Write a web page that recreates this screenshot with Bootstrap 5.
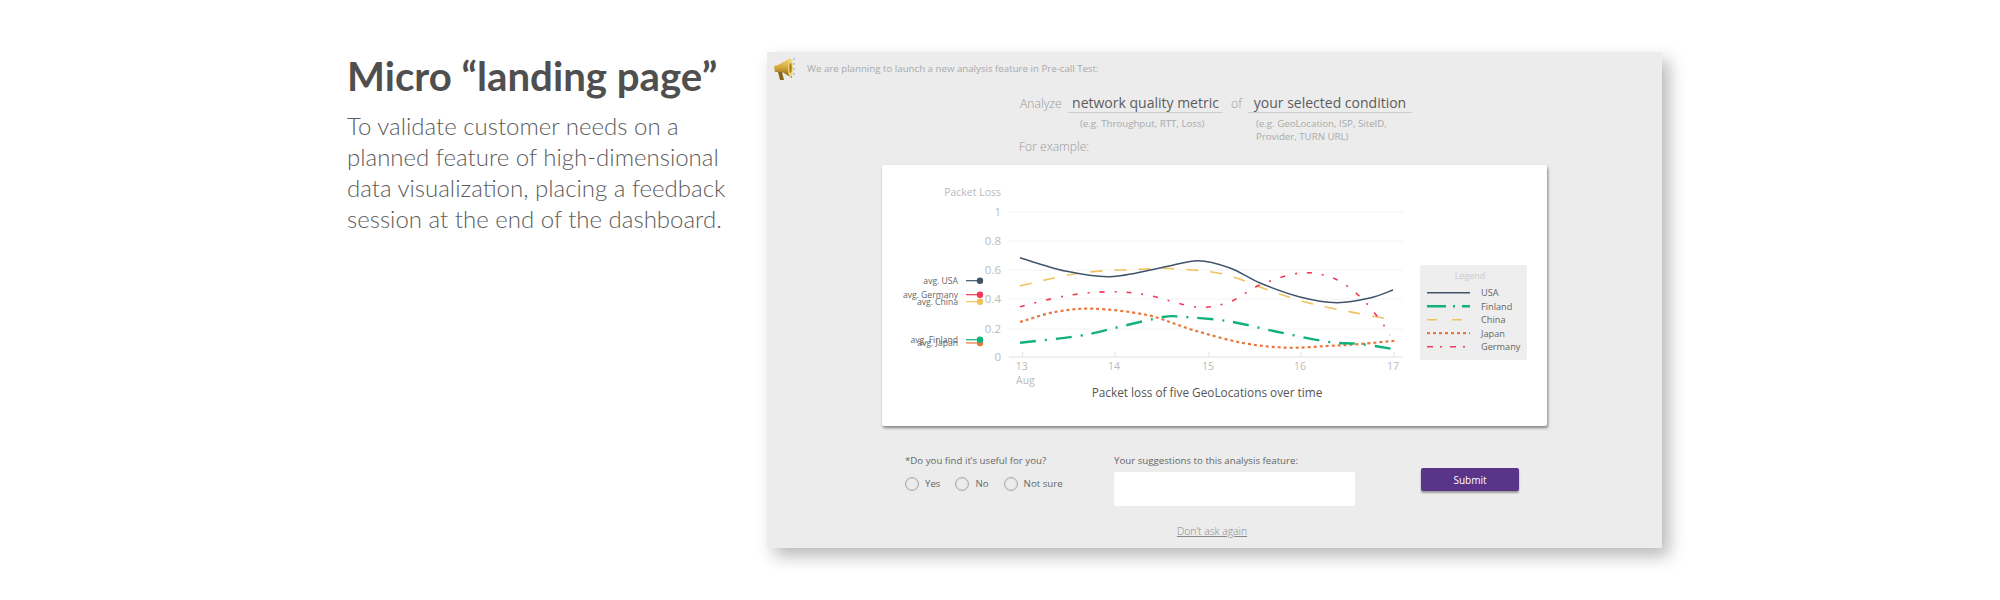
<!DOCTYPE html>
<html lang="en">
<head>
  <meta charset="UTF-8">
  <title>Micro landing page</title>
  <link rel="stylesheet" href="https://cdn.jsdelivr.net/npm/bootstrap@5.3.0/dist/css/bootstrap.min.css">
  <style>
    body { background: #fff; overflow: hidden; font-family: "Open Sans", sans-serif; }
    .page-wrap { padding-top: 52px; height: 600px; }
    .intro { flex: 0 0 767px; padding-left: 347px; }
    .intro-inner { width: 400px; }
    .intro h1 { font-family: Lato, sans-serif; font-weight: 700; font-size: 40.2px; color: #4f4f4f; margin: 0 0 10px; line-height: 48px; }
    .intro p { font-family: Lato, sans-serif; font-weight: 300; font-size: 24px; line-height: 31px; color: #5c5c5c; margin: 0; }
    .panel-box { width: 895px; height: 496px; background: #ececec; box-shadow: 7px 8px 16px rgba(0,0,0,.28); }
    .top-note { padding-left: 7px; height: 34px; font-size: 9.7px; color: #aaa; gap: 12px; }
    .query-row { padding-left: 253px; height: 51px; }
    .q-word { font-size: 12.2px; font-weight: 300; color: #999; padding-top: 9px; }
    .q-field { border-bottom: 1px solid #ccc; font-size: 14px; color: #5c5c5c; text-align: center; height: 27px; padding-top: 8px; line-height: 18px; white-space: nowrap; }
    .q-help { font-size: 9.7px; line-height: 13px; color: #aaa; }
    .example-label { padding-left: 252px; font-size: 12.1px; font-weight: 300; color: #999; height: 20px; line-height: 20px; margin-bottom: 8px; }
    .chart-card { width: 665px; height: 261px; margin-left: 115px; background: #fff; border-radius: 2px; box-shadow: 1px 2px 3px rgba(0,0,0,.45); }
    .chart-card svg { display: block; font-family: "Open Sans", sans-serif; }
    .feedback-row { padding: 26px 0 0 138px; font-size: 9.7px; color: #666; }
    .f-q1 { width: 209px; }
    .f-q2 { width: 241px; margin-right: 66px; }
    .f-label { height: 17px; line-height: 17px; white-space: nowrap; }
    .f-radio { gap: 6px; margin-top: 6px; margin-right: 15px; height: 18px; }
    .f-radio input { width: 14px; height: 14px; margin: 0; background: #ececec; border: 1px solid #aaa; box-shadow: inset 0 0 2px rgba(0,0,0,.15); }
    textarea.f-input { height: 34px; min-height: 34px; border: 0; border-radius: 2px; margin-top: 3px; resize: none; padding: 0; }
    .submit-btn { width: 98px; height: 23px; margin-top: 16px; padding: 0; font-size: 10px; line-height: 22px; background: #5a3488; border: 0; color: #fff; border-radius: 2px; box-shadow: 0 2px 2px rgba(0,0,0,.35); }
    .never-link { display: block; text-align: center; font-size: 10.4px; font-weight: 300; color: #888; margin: 18px 0 0 -5px; }
    .tick-y { font-size: 11.5px; fill: #bbb; text-anchor: end; }
    .tick-x { font-size: 10.5px; fill: #bbb; }
    .avg-label { font-size: 8.6px; fill: #666; text-anchor: end; }
    .leg-label { font-size: 9.2px; fill: #666; }
  </style>
</head>
<body>
  <div class="page-wrap d-flex">
    <div class="intro">
      <div class="intro-inner">
        <h1>Micro “landing page”</h1>
        <p>To validate customer needs on a planned feature of high-dimensional data visualization, placing a feedback session at the end of the dashboard.</p>
      </div>
    </div>

    <div class="panel-box">
      <div class="top-note d-flex align-items-center">
        <svg width="21" height="24" viewBox="0 0 21 24">
          <defs>
            <linearGradient id="gold" x1="0" y1="0" x2="0" y2="1">
              <stop offset="0" stop-color="#f4dc7a"/>
              <stop offset="0.5" stop-color="#d4a437"/>
              <stop offset="1" stop-color="#7a5514"/>
            </linearGradient>
          </defs>
          <path d="M0 9 L4 8 L16 1 L18 21 L8 15 L1 15 Z" fill="url(#gold)"/>
          <path d="M4 15 L8 15 L10 23 L6 23 Z" fill="#8a6418"/>
          <ellipse cx="16.5" cy="11" rx="2.5" ry="9.5" fill="#f0d878"/>
          <ellipse cx="16.5" cy="11" rx="1.2" ry="5" fill="#a87c22"/>
          <path d="M20 1 L20 21" stroke="#6aa8ee" stroke-width="1" stroke-dasharray="2 3"/>
        </svg>
        <span>We are planning to launch a new analysis feature in Pre-call Test:</span>
      </div>

      <div class="query-row d-flex">
        <span class="q-word" style="width:48px">Analyze</span>
        <div style="width:155px">
          <div class="q-field">network quality metric</div>
          <div class="q-help ps-2 ms-1 pt-1">(e.g. Throughput, RTT, Loss)</div>
        </div>
        <span class="q-word" style="width:25px;padding-left:8px">of</span>
        <div style="width:164px">
          <div class="q-field">your selected condition</div>
          <div class="q-help ps-2 pt-1">(e.g. GeoLocation, ISP, SiteID, Provider, TURN URL)</div>
        </div>
      </div>
      <div class="example-label">For example:</div>

      <div class="chart-card">
        <svg id="chart" width="665" height="261" viewBox="882 165 665 261"></svg>
      </div>

      <div class="feedback-row d-flex">
        <div class="f-q1">
          <div class="f-label">*Do you find it’s useful for you?</div>
          <div class="d-flex">
            <label class="f-radio d-flex align-items-center"><input class="form-check-input" type="radio" name="useful"> Yes</label>
            <label class="f-radio d-flex align-items-center"><input class="form-check-input" type="radio" name="useful"> No</label>
            <label class="f-radio d-flex align-items-center"><input class="form-check-input" type="radio" name="useful"> Not sure</label>
          </div>
        </div>
        <div class="f-q2">
          <div class="f-label">Your suggestions to this analysis feature:</div>
          <textarea class="form-control f-input"></textarea>
        </div>
        <div><button class="btn submit-btn">Submit</button></div>
      </div>
      <a class="never-link" href="#">Don’t ask again</a>
    </div>
  </div>

  <script src="https://cdn.jsdelivr.net/npm/bootstrap@5.3.0/dist/js/bootstrap.bundle.min.js"></script>
  <script>
    const series = [
      { name: "China", color: "#f0c25e", w: 1.6, dash: "12 12", avg: 301.7,
        pts: [[1020,286],[1080,273],[1147,269],[1173,268.7],[1223,274],[1273,291.7],[1317,305],[1393,320]], legDash: "10 15" },
      { name: "Germany", color: "#f2385a", w: 1.6, dash: "5 10 2 10", avg: 294.7,
        pts: [[1020,306.7],[1065,296],[1110,291.7],[1147,295],[1197,307],[1230,301.7],[1260,285],[1300,273],[1333,278],[1360,296.7],[1380,320],[1390,335]], legDash: "6 7 2 8" },
      { name: "Japan", color: "#e8773c", w: 2.2, dash: "3 3", avg: 343,
        pts: [[1020,322],[1055,312],[1093,308.7],[1147,315],[1193,330],[1243,343],[1287,347.7],[1327,346],[1360,344],[1395,340.7]], legDash: "3 3" },
      { name: "Finland", color: "#10b27a", w: 2.4, dash: "16 9 2 9", avg: 339.7,
        pts: [[1020,342.7],[1080,335.7],[1120,326.7],[1163,317],[1180,316.7],[1227,321],[1277,331.7],[1327,341.7],[1360,344],[1393,349]], legDash: "19 7 2 7" },
      { name: "USA", color: "#3f5468", w: 1.5, dash: "", avg: 280.7,
        pts: [[1020,257.7],[1065,271],[1110,276.7],[1160,268],[1198,260.7],[1230,268],[1260,283],[1300,297],[1337,302.7],[1370,298],[1393,290]], legDash: "" }
    ];
    const legendOrder = ["USA", "Finland", "China", "Japan", "Germany"];

    // catmull-rom through the read-off points
    function smooth(p) {
      let d = "M" + p[0].join(" ");
      for (let i = 0; i < p.length - 1; i++) {
        const a = p[i - 1] || p[i], b = p[i], c = p[i + 1], e = p[i + 2] || c;
        d += ` C${b[0] + (c[0] - a[0]) / 6} ${b[1] + (c[1] - a[1]) / 6} ${c[0] - (e[0] - b[0]) / 6} ${c[1] - (e[1] - b[1]) / 6} ${c[0]} ${c[1]}`;
      }
      return d;
    }

    let out = "";
    out += `<text class="tick-y" x="1001" y="196" style="font-size:10.5px">Packet Loss</text>`;
    [[1, 212], [0.8, 241], [0.6, 270], [0.4, 299], [0.2, 329], [0, 357]].forEach(([v, y]) => {
      out += `<line x1="1009" x2="1403" y1="${y}" y2="${y}" stroke="${v === 0 ? "#e2e2e2" : "#f3f3f3"}" stroke-width="1"/>`;
      out += `<text class="tick-y" x="1001" y="${y + 4}">${v}</text>`;
    });
    [[13, 1022.7], [14, 1115], [15, 1209], [16, 1301], [17, 1394]].forEach(([v, x]) => {
      out += `<line x1="${x}" x2="${x}" y1="352" y2="357" stroke="#e2e2e2"/>`;
      out += `<text class="tick-x" x="${x - 1}" y="370" text-anchor="middle">${v}</text>`;
    });
    out += `<text class="tick-x" x="1016" y="384">Aug</text>`;
    out += `<text x="1207" y="397" text-anchor="middle" font-size="11.8" fill="#555">Packet loss of five GeoLocations over time</text>`;

    series.forEach(s => {
      out += `<path d="${smooth(s.pts)}" fill="none" stroke="${s.color}" stroke-width="${s.w}" stroke-dasharray="${s.dash}"/>`;
    });

    // average markers left of the axis
    ["Japan", "Finland", "China", "Germany", "USA"].forEach(n => {
      const s = series.find(x => x.name === n);
      out += `<line x1="966" x2="978" y1="${s.avg}" y2="${s.avg}" stroke="${s.color}" stroke-width="1.2"/>`;
      out += `<circle cx="980" cy="${s.avg}" r="3.2" fill="${s.color}"/>`;
      out += `<text class="avg-label" x="958" y="${s.avg + 3}">avg. ${n}</text>`;
    });

    out += `<rect x="1420" y="265" width="107" height="95" rx="2" fill="#eee"/>`;
    out += `<text x="1470" y="279" text-anchor="middle" font-size="9" fill="#ccc">Legend</text>`;
    legendOrder.forEach((n, i) => {
      const s = series.find(x => x.name === n), y = 292.7 + i * 13.5;
      out += `<line x1="1427" x2="1470" y1="${y}" y2="${y}" stroke="${s.color}" stroke-width="${s.w}" stroke-dasharray="${s.legDash}"/>`;
      out += `<text class="leg-label" x="1481" y="${y + 3.5}">${n}</text>`;
    });

    document.getElementById("chart").innerHTML = out;
  </script>
</body>
</html>
